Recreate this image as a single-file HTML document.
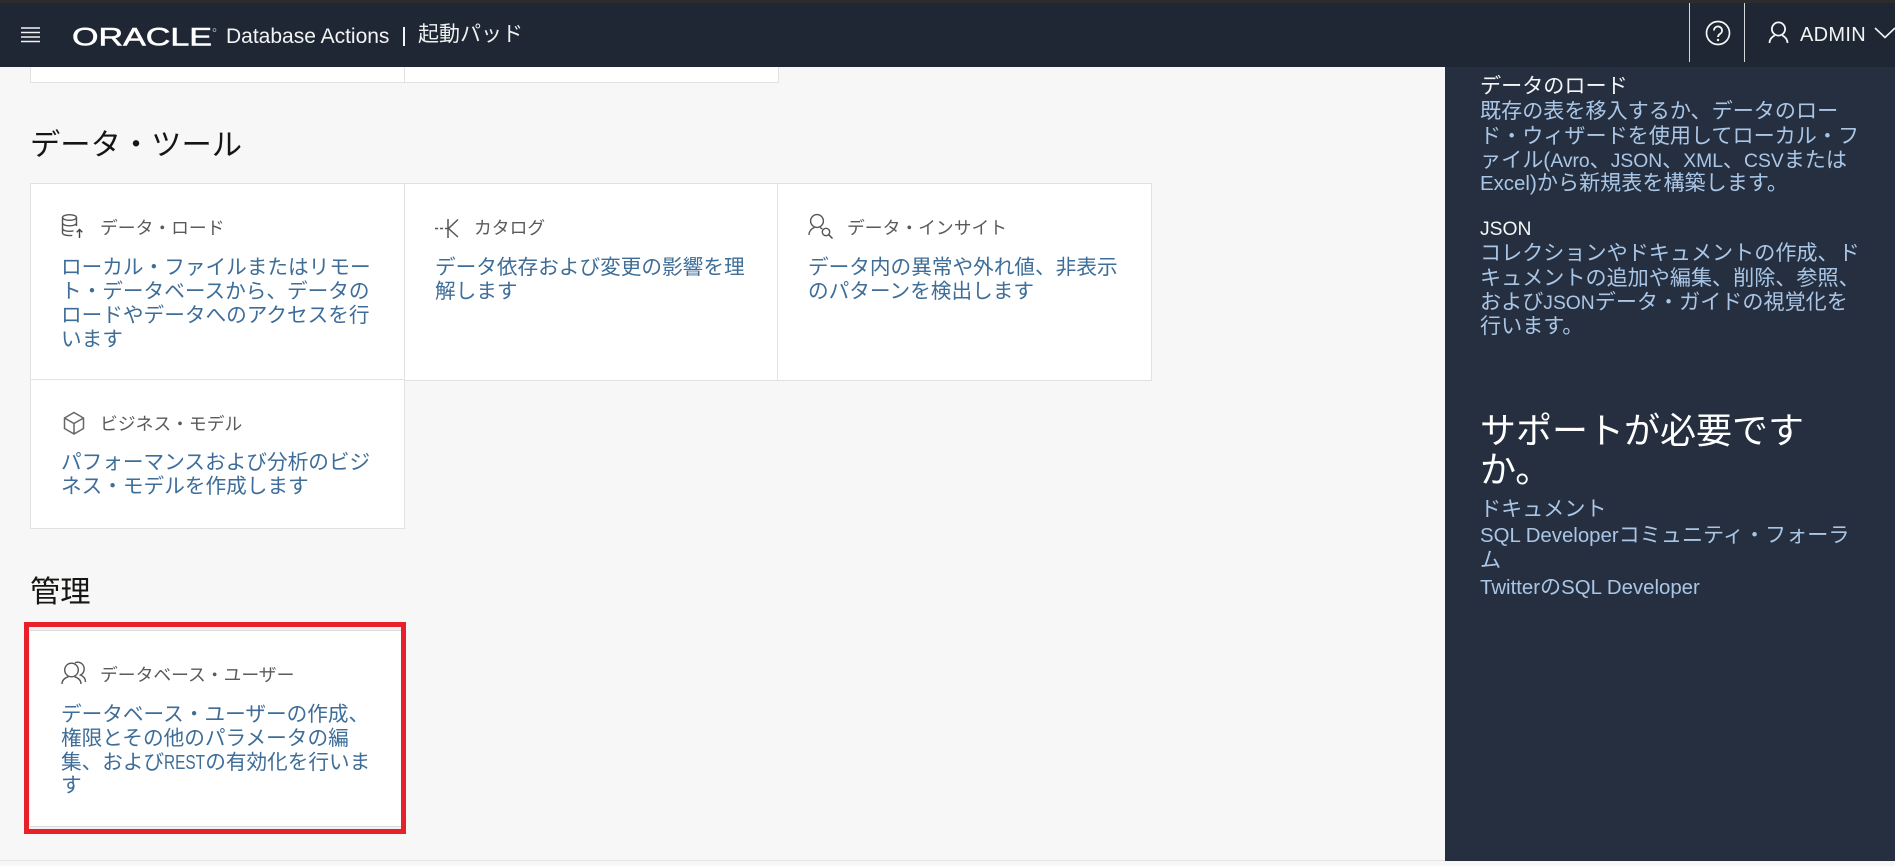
<!DOCTYPE html>
<html lang="ja">
<head>
<meta charset="utf-8">
<title>起動パッド</title>
<style>
html,body{margin:0;padding:0;width:1895px;height:866px;overflow:hidden;background:#f7f7f7;}
body{position:relative;font-family:"Liberation Sans","Noto Sans CJK JP",sans-serif;}
div{position:absolute;white-space:nowrap;}
.box{background:#fff;box-sizing:border-box;}
.h{font-size:30.3px;line-height:40px;color:#161513;}
.t{font-size:17.8px;line-height:24px;color:#5a5a5a;}
.d{font-size:20.65px;line-height:24px;color:#3d6d98;}
.p{font-size:21.1px;line-height:24px;color:#aac6e6;}
.w{font-size:21.1px;line-height:24px;color:#f4f6f8;}
.l{font-size:19.3px;}
.m{font-size:20.4px;}
.r{display:inline-block;width:41px;transform:scaleX(.745);transform-origin:0 50%;font-size:20.65px;}
.line{background:#e2e2e2;}
svg{position:absolute;overflow:visible;}
</style>
</head>
<body>
<!-- top strip + header -->
<div style="left:0;top:0;width:1895px;height:3px;background:#2c2c2c"></div>
<div style="left:0;top:3px;width:1895px;height:64px;background:#1e2733"></div>
<svg style="left:0;top:0" width="240" height="67">
  <g stroke="#f2f3f4" stroke-width="1.4">
    <path d="M21 28H40M21 32.5H40M21 37H40M21 41.5H40"/>
  </g>
  <text x="72" y="45.5" font-family="Liberation Sans" font-size="25" fill="#fff" stroke="#fff" stroke-width=".55" textLength="140" lengthAdjust="spacingAndGlyphs">ORACLE</text>
  <circle cx="214.5" cy="30" r="1.5" fill="none" stroke="#cfd3d7" stroke-width=".6"/>
</svg>
<div style="left:226px;top:23px;font-size:21px;line-height:28px;color:#f2f3f4">Database Actions</div>
<div style="left:403px;top:27px;width:1.5px;height:19px;background:#f2f3f4"></div>
<div style="left:418px;top:21px;font-size:21px;line-height:28px;color:#eef0f2">起動パッド</div>

<div style="left:1689px;top:3px;width:1px;height:59px;background:#d5d8db"></div>
<div style="left:1744px;top:3px;width:1px;height:59px;background:#d5d8db"></div>
<svg style="left:1701px;top:15px" width="34" height="36" fill="none">
  <circle cx="17" cy="18" r="11.5" stroke="#f6f7f8" stroke-width="1.7"/>
  <path d="M13 15.5a4 4 0 1 1 6.2 3.3c-1.5 1-2.2 1.7-2.2 3.2" stroke="#f6f7f8" stroke-width="1.8"/>
  <circle cx="17" cy="25" r="1.2" fill="#f6f7f8"/>
</svg>
<svg style="left:1766px;top:20px" width="26" height="26" fill="none" stroke="#f6f7f8" stroke-width="1.8">
  <circle cx="12.5" cy="9" r="6.6"/>
  <path d="M3.5 23c0-4 2-6 5.2-7.6M21.5 23c0-4-2-6-5.2-7.6"/>
</svg>
<div style="left:1800px;top:21px;font-size:20px;line-height:28px;color:#f2f3f4;letter-spacing:.3px">ADMIN</div>
<svg style="left:1874px;top:26px" width="21" height="14" fill="none" stroke="#f2f3f4" stroke-width="1.6"><path d="M1 2l10 9.5L21 2"/></svg>

<!-- top fragment cards -->
<div class="box" style="left:30px;top:67px;width:749px;height:16px;border:1px solid #e2e2e2;border-top:0"></div>
<div class="line" style="left:404px;top:67px;width:1px;height:15px"></div>

<!-- data tools -->
<div class="h" style="left:30px;top:126px">データ・ツール</div>
<div class="box" style="left:30px;top:183px;width:1122px;height:198px;border:1px solid #e2e2e2"></div>
<div class="line" style="left:404px;top:183px;width:1px;height:198px"></div>
<div class="line" style="left:777px;top:183px;width:1px;height:198px"></div>
<div class="box" style="left:30px;top:379px;width:375px;height:150px;border:1px solid #e2e2e2"></div>

<!-- card 1 -->
<svg style="left:60px;top:213px" width="26" height="26" fill="none" stroke="#555" stroke-width="1.4">
  <ellipse cx="9.5" cy="4.5" rx="7" ry="2.8"/>
  <path d="M2.5 4.5V20c0 1.4 3 2.6 7 2.6 1 0 2-.1 2.8-.2M2.5 10c0 1.5 3 2.8 7 2.8s7-1.3 7-2.8M2.5 15.5c0 1.5 3 2.8 7 2.8 1.5 0 2.8-.2 4-.5M16.5 4.5V13"/>
  <path d="M19.5 25v-8.5M16.7 19.3l2.8-2.8 2.8 2.8" stroke="#444"/>
</svg>
<div class="t" style="left:100px;top:216px">データ・ロード</div>
<div class="d" style="left:61px;top:256px">ローカル・ファイルまたはリモー</div>
<div class="d" style="left:61px;top:280px">ト・データベースから、データの</div>
<div class="d" style="left:61px;top:304px">ロードやデータへのアクセスを行</div>
<div class="d" style="left:61px;top:328px">います</div>

<!-- card 2 -->
<svg style="left:434px;top:217px" width="28" height="22" fill="none" stroke="#555" stroke-width="1.5">
  <path d="M1 11.5h3.2M6 11.5h3.2M11 11.5h3M14 2v19M24 2.5L14.5 11.5 24 20"/>
</svg>
<div class="t" style="left:474px;top:216px">カタログ</div>
<div class="d" style="left:435px;top:256px">データ依存および変更の影響を理</div>
<div class="d" style="left:435px;top:280px">解します</div>

<!-- card 3 -->
<svg style="left:806px;top:212px" width="30" height="28" fill="none" stroke="#555" stroke-width="1.4">
  <circle cx="11" cy="9" r="6.4"/>
  <path d="M3 23c0-3.8 2-6 5.5-7.6M14 15.6c1 .4 1.8 .9 2.4 1.4"/>
  <circle cx="20" cy="20" r="3.7"/>
  <path d="M22.8 22.8L26.5 26.5" stroke="#444"/>
</svg>
<div class="t" style="left:847px;top:216px">データ・インサイト</div>
<div class="d" style="left:808px;top:256px">データ内の異常や外れ値、非表示</div>
<div class="d" style="left:808px;top:280px">のパターンを検出します</div>

<!-- card 4 -->
<svg style="left:62px;top:410px" width="24" height="26" fill="none" stroke="#666" stroke-width="1.5">
  <path d="M12 2.5L21.5 8V18.5L12 24 2.5 18.5V8ZM2.5 8L12 13.5 21.5 8M12 13.5V24"/>
</svg>
<div class="t" style="left:100px;top:412px">ビジネス・モデル</div>
<div class="d" style="left:61px;top:451px">パフォーマンスおよび分析のビジ</div>
<div class="d" style="left:61px;top:475px">ネス・モデルを作成します</div>

<!-- admin -->
<div class="h" style="left:30px;top:573px">管理</div>
<div style="left:24px;top:622px;width:382px;height:212px;box-sizing:border-box;border:5px solid #e8202a;background:#f1f1f3"></div>
<div class="box" style="left:30px;top:631px;width:371px;height:196px"></div>
<div style="left:30px;top:630px;width:371px;height:1px;background:#dcdcdf"></div>
<div style="left:30px;top:826px;width:371px;height:1px;background:#dcdcdf"></div>
<svg style="left:60px;top:660px" width="30" height="26" fill="none" stroke="#555" stroke-width="1.4">
  <circle cx="11.5" cy="10" r="6.8"/>
  <path d="M2 24c0-3.8 2.5-6 6.5-7.3M21 24c0-3.8-2.5-6-6.5-7.3"/>
  <path d="M15 2.8c1-.4 1.8-.6 2.6-.6 3.8 0 6.6 3 6.6 6.8 0 2.7-1.4 4.8-3.7 6 3 1.2 5 3.5 5 7"/>
</svg>
<div class="t" style="left:100px;top:663px">データベース・ユーザー</div>
<div class="d" style="left:61px;top:703px">データベース・ユーザーの作成、</div>
<div class="d" style="left:61px;top:727px">権限とその他のパラメータの編</div>
<div class="d" style="left:61px;top:751px">集、および<span class="r">REST</span>の有効化を行いま</div>
<div class="d" style="left:61px;top:774px">す</div>

<!-- bottom line -->
<div style="left:0;top:860px;width:1895px;height:1px;background:#e4e4e6"></div>
<div style="left:0;top:861px;width:1895px;height:5px;background:#f7f7f8"></div>

<!-- right panel -->
<div style="left:1445px;top:67px;width:450px;height:794px;background:#252f3f"></div>
<div class="w" style="left:1480px;top:75px">データのロード</div>
<div class="p" style="left:1480px;top:100px">既存の表を移入するか、データのロー</div>
<div class="p" style="left:1480px;top:125px">ド・ウィザードを使用してローカル・フ</div>
<div class="p" style="left:1480px;top:149px">ァイル(<span class="l">Avro</span>、<span class="l">JSON</span>、<span class="l">XML</span>、<span class="l">CSV</span>または</div>
<div class="p" style="left:1480px;top:172px"><span class="m">Excel</span>)から新規表を構築します。</div>
<div class="w" style="left:1480px;top:217px"><span class="l">JSON</span></div>
<div class="p" style="left:1480px;top:242px">コレクションやドキュメントの作成、ド</div>
<div class="p" style="left:1480px;top:267px">キュメントの追加や編集、削除、参照、</div>
<div class="p" style="left:1480px;top:291px">および<span class="l">JSON</span>データ・ガイドの視覚化を</div>
<div class="p" style="left:1480px;top:315px">行います。</div>
<div style="left:1480px;top:409px;font-size:36px;line-height:44px;color:#fff">サポートが必要です</div>
<div style="left:1480px;top:448px;font-size:36px;line-height:44px;color:#fff">か。</div>
<div class="p" style="left:1480px;top:498px">ドキュメント</div>
<div class="p" style="left:1480px;top:524px"><span class="m">SQL Developer</span>コミュニティ・フォーラ</div>
<div class="p" style="left:1480px;top:549px">ム</div>
<div class="p" style="left:1480px;top:576px"><span class="m">Twitter</span>の<span class="m">SQL Developer</span></div>
</body>
</html>
